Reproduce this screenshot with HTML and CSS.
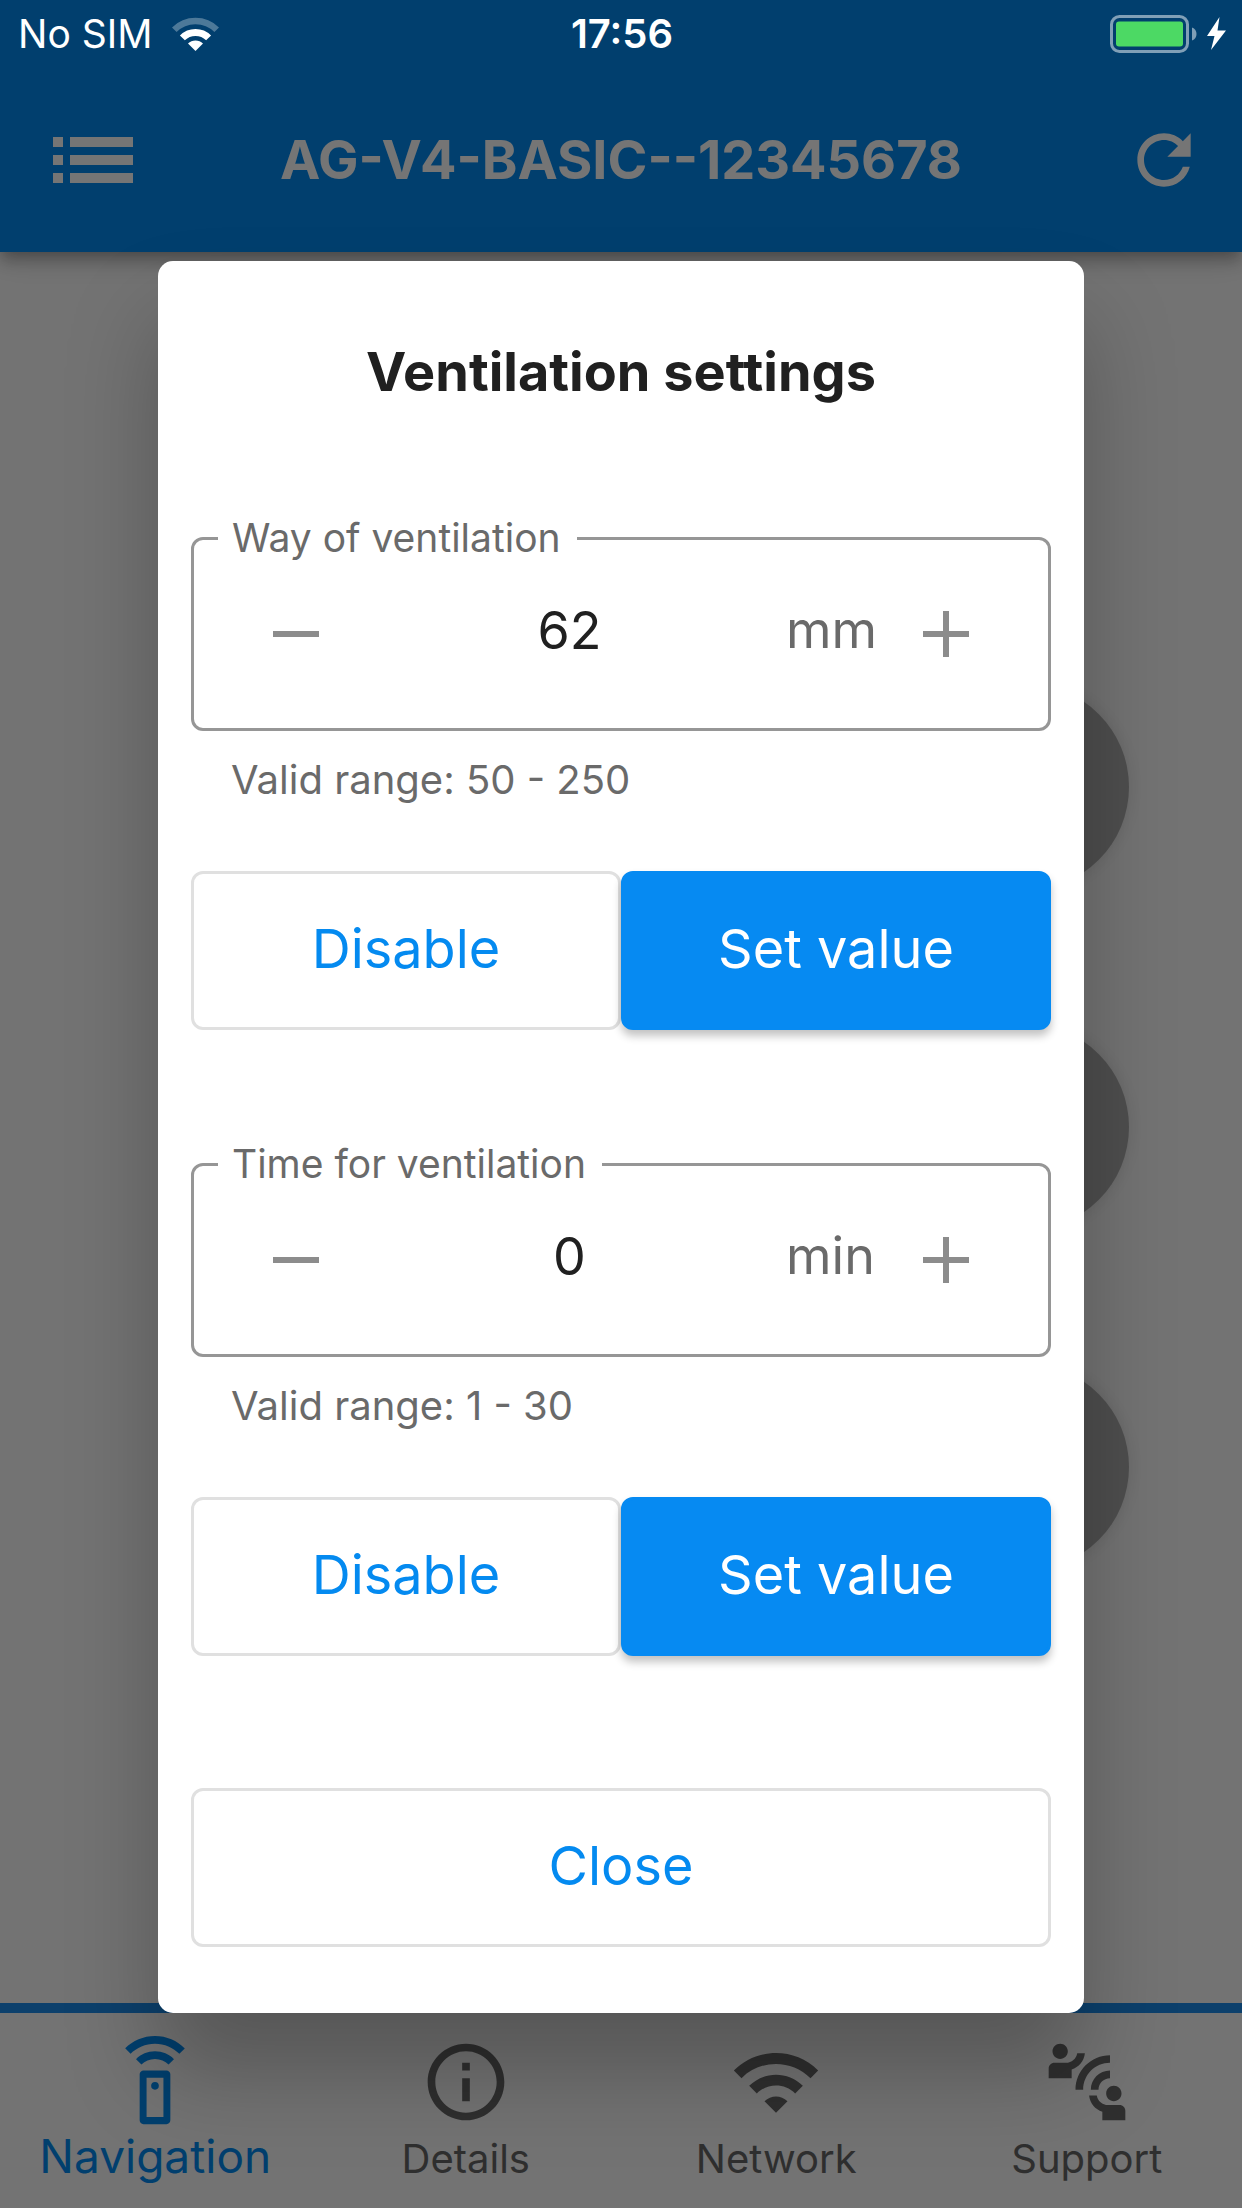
FILE: index.html
```html
<!DOCTYPE html>
<html lang="en">
<head>
<meta charset="utf-8">
<meta name="viewport" content="width=device-width, initial-scale=1">
<title>Ventilation settings</title>
<link rel="stylesheet" href="styles.css">
</head>
<body>
<div class="app">
  <header class="app-header">
    <div class="status-bar">
      <div class="status-left">
        <span>No SIM</span>
        <svg class="status-wifi" viewBox="0 0 47 34" aria-hidden="true">
          <path d="M2.3 12.8A30 30 0 0 1 44.7 12.8" fill="none" stroke="#fff" stroke-width="6.5" opacity=".3"/>
          <path d="M10.4 20.9A18.5 18.5 0 0 1 36.6 20.9" fill="none" stroke="#fff" stroke-width="7"/>
          <path d="M23.5 34L16 26.5A10.6 10.6 0 0 1 31 26.5Z" fill="#fff"/>
        </svg>
      </div>
      <time class="status-time">17:56</time>
      <div class="status-right">
        <svg class="status-battery" viewBox="0 0 116 38" aria-hidden="true">
          <rect x="1.5" y="1.5" width="76" height="35" rx="8" fill="none" stroke="#fff" stroke-opacity=".5" stroke-width="3"/>
          <rect x="6" y="6.5" width="67" height="25" rx="3" fill="#4cd964"/>
          <path d="M82 12.5C88 14.5 88 23.5 82 25.5Z" fill="#fff" fill-opacity=".5"/>
          <path d="M109.5 2L97 21H104.5L101 35L116 15.5H107.5Z" fill="#fff"/>
        </svg>
      </div>
    </div>
    <div class="toolbar">
      <button class="icon-button menu-button" type="button" aria-label="Menu">
        <svg class="list-icon" viewBox="0 0 80 46"><path d="M0 0h10v10H0zM17 0h63v10H17zM0 18h10v10H0zM17 18h63v10H17zM0 36h10v10H0zM17 36h63v10H17z"/></svg>
      </button>
      <h1 class="toolbar-title">AG-V4-BASIC--12345678</h1>
      <button class="icon-button refresh-button" type="button" aria-label="Refresh">
        <svg class="refresh-icon" viewBox="0 0 24 24"><path d="M17.65 6.35C16.2 4.9 14.21 4 12 4c-4.42 0-7.99 3.58-7.99 8s3.57 8 7.99 8c3.73 0 6.84-2.55 7.73-6h-2.08c-.82 2.33-3.04 4-5.65 4-3.31 0-6-2.69-6-6s2.69-6 6-6c1.66 0 3.14.69 4.22 1.78L13 11h7V4l-2.35 2.35z"/></svg>
      </button>
    </div>
  </header>

  <main class="controls">
    <button class="round-button" type="button" aria-label="Up"></button>
    <button class="round-button" type="button" aria-label="Stop"></button>
    <button class="round-button" type="button" aria-label="Down"></button>
  </main>

  <nav class="bottom-nav">
    <a class="nav-item nav-item-active" href="#navigation">
      <svg class="nav-icon" viewBox="0 0 24 24" aria-hidden="true"><path fill-rule="evenodd" d="M15 9H9c-.55 0-1 .45-1 1v12c0 .55.45 1 1 1h6c.55 0 1-.45 1-1V10c0-.55-.45-1-1-1zm-.8 12.1H9.8V10.9h4.4z"/><circle cx="12" cy="13" r="1"/><path d="M7.05 6.05l1.41 1.41C9.37 6.56 10.62 6 12 6s2.63.56 3.54 1.46l1.41-1.41C15.68 4.78 13.93 4 12 4s-3.68.78-4.95 2.05zM12 0C8.96 0 6.21 1.23 4.22 3.22l1.41 1.41C7.26 3.01 9.51 2 12 2s4.74 1.01 6.36 2.64l1.41-1.41C17.79 1.23 15.04 0 12 0z"/></svg>
      <span class="nav-label">Navigation</span>
    </a>
    <a class="nav-item" href="#details">
      <svg class="nav-icon" viewBox="0 0 24 24" aria-hidden="true"><path d="M11 7h2v2h-2zm0 4h2v6h-2zm1-9C6.48 2 2 6.48 2 12s4.48 10 10 10 10-4.48 10-10S17.52 2 12 2zm0 18c-4.41 0-8-3.59-8-8s3.59-8 8-8 8 3.59 8 8-3.59 8-8 8z"/></svg>
      <span class="nav-label">Details</span>
    </a>
    <a class="nav-item" href="#network">
      <svg class="nav-icon" viewBox="0 0 24 24" aria-hidden="true"><path d="M1 9l2 2c4.97-4.97 13.03-4.97 18 0l2-2C16.93 2.93 7.08 2.93 1 9zm8 8l3 3 3-3c-1.65-1.66-4.34-1.66-6 0zm-4-4l2 2c2.76-2.76 7.24-2.76 10 0l2-2C15.14 9.14 8.87 9.14 5 13z"/></svg>
      <span class="nav-label">Network</span>
    </a>
    <a class="nav-item" href="#support">
      <svg class="nav-icon" viewBox="0 0 24 24" aria-hidden="true"><path d="M11 14H9c0-4.97 4.03-9 9-9v2c-3.87 0-7 3.13-7 7zm7-3V9c-2.76 0-5 2.24-5 5h2c0-1.66 1.34-3 3-3zM7 4c0-1.11-.89-2-2-2s-2 .89-2 2 .89 2 2 2 2-.89 2-2zm4.45.5h-2C9.21 5.92 7.99 7 6.5 7h-3C2.67 7 2 7.67 2 8.5V11h6V8.74c1.86-.59 3.25-2.23 3.45-4.24zM19 17c1.11 0 2-.89 2-2s-.89-2-2-2-2 .89-2 2 .89 2 2 2zm1.5 1h-3c-1.49 0-2.71-1.08-2.95-2.5h-2c.2 2.01 1.59 3.65 3.45 4.24V22h6v-2.5c0-.83-.67-1.5-1.5-1.5z"/></svg>
      <span class="nav-label">Support</span>
    </a>
  </nav>
</div>

<div class="overlay">
  <form class="dialog" role="dialog" aria-modal="true" aria-labelledby="dialog-title">
    <h2 class="dialog-title" id="dialog-title">Ventilation settings</h2>

    <section class="setting">
      <fieldset class="field">
        <legend class="field-legend"><label for="way">Way of ventilation</label></legend>
        <div class="field-row">
          <button class="step-button" type="button" aria-label="Decrease"><svg class="step-icon" viewBox="0 0 46 46"><path d="M0 20h46v6H0z"/></svg></button>
          <input class="field-input" id="way" type="text" inputmode="numeric" value="62">
          <span class="field-unit">mm</span>
          <button class="step-button" type="button" aria-label="Increase"><svg class="step-icon" viewBox="0 0 46 46"><path d="M0 20h20V0h6v20h20v6H26v20h-6V26H0z"/></svg></button>
        </div>
      </fieldset>
      <p class="field-help">Valid range: 50 - 250</p>
      <div class="button-row">
        <button class="button button-outline" type="button">Disable</button>
        <button class="button button-filled" type="button">Set value</button>
      </div>
    </section>

    <section class="setting">
      <fieldset class="field">
        <legend class="field-legend"><label for="time">Time for ventilation</label></legend>
        <div class="field-row">
          <button class="step-button" type="button" aria-label="Decrease"><svg class="step-icon" viewBox="0 0 46 46"><path d="M0 20h46v6H0z"/></svg></button>
          <input class="field-input" id="time" type="text" inputmode="numeric" value="0">
          <span class="field-unit">min</span>
          <button class="step-button" type="button" aria-label="Increase"><svg class="step-icon" viewBox="0 0 46 46"><path d="M0 20h20V0h6v20h20v6H26v20h-6V26H0z"/></svg></button>
        </div>
      </fieldset>
      <p class="field-help">Valid range: 1 - 30</p>
      <div class="button-row">
        <button class="button button-outline" type="button">Disable</button>
        <button class="button button-filled" type="button">Set value</button>
      </div>
    </section>

    <button class="button button-outline button-close" type="button">Close</button>
  </form>
</div>
</body>
</html>
```

FILE: styles.css
```css
* {
  box-sizing: border-box;
}

body {
  margin: 0;
  background: #fafafa;
  font-family: Inter, "Liberation Sans", sans-serif;
}

button,
input {
  font: inherit;
}

h1,
h2,
p {
  margin: 0;
}

svg {
  display: block;
  fill: currentColor;
}

.app {
  display: flex;
  flex-direction: column;
  min-height: 100vh;
}

/* Header */
.app-header {
  position: relative;
  background: #048af0;
  color: #fff;
  box-shadow: 0 6px 12px -3px rgba(0, 0, 0, .2), 0 12px 15px rgba(0, 0, 0, .14), 0 3px 30px rgba(0, 0, 0, .12);
}

.status-bar {
  position: relative;
  z-index: 3;
  display: grid;
  grid-template-columns: 1fr auto 1fr;
  align-items: center;
  height: 68px;
  padding: 0 16px 0 18px;
  font-size: 39px;
  line-height: 48px;
}

.status-left {
  display: flex;
  align-items: center;
  gap: 20px;
}

.status-wifi {
  width: 47px;
  height: 34px;
}

.status-time {
  font-size: 40px;
  font-weight: 600;
}

.status-right {
  display: flex;
  justify-content: flex-end;
}

.status-battery {
  width: 116px;
  height: 38px;
}

.toolbar {
  display: grid;
  grid-template-columns: 1fr auto 1fr;
  align-items: center;
  height: 184px;
  padding: 0 38px;
}

.icon-button {
  padding: 0;
  border: 0;
  background: none;
  color: inherit;
}

.menu-button {
  justify-self: start;
  padding-left: 15px;
}

.refresh-button {
  justify-self: end;
}

.list-icon {
  width: 80px;
  height: 46px;
}

.refresh-icon {
  width: 80px;
  height: 80px;
}

.toolbar-title {
  font-size: 54px;
  font-weight: 700;
  line-height: 60px;
}

/* Remote control buttons */
.controls {
  flex: 1;
  display: flex;
  flex-direction: column;
  align-items: flex-end;
  gap: 134px;
  padding: 432px 113px 0;
}

.round-button {
  width: 206px;
  height: 206px;
  padding: 0;
  border: 0;
  border-radius: 50%;
  background: #aaa;
  box-shadow: 0 0 12px 3px rgba(0, 0, 0, .08);
}

/* Bottom navigation */
.bottom-nav {
  display: grid;
  grid-template-columns: repeat(4, 1fr);
  height: 205px;
  padding-top: 23px;
  border-top: 10px solid #1c8cec;
}

.nav-item {
  display: flex;
  flex-direction: column;
  align-items: center;
  color: #686868;
  font-size: 40px;
  line-height: 62px;
  text-decoration: none;
}

.nav-item-active {
  color: #048af0;
  font-size: 46px;
  line-height: 56px;
}

.nav-icon {
  width: 92px;
  height: 92px;
}

/* Modal dialog */
.overlay {
  position: absolute;
  inset: 0;
  z-index: 2;
  padding: 261px 158px 0;
  background: rgba(0, 0, 0, .54);
}

.dialog {
  display: flex;
  flex-direction: column;
  padding: 81px 33px 66px;
  border-radius: 15px;
  background: #fff;
  box-shadow: 0 60px 90px rgba(0, 0, 0, .25);
}

.dialog-title {
  margin-bottom: 112px;
  color: #202020;
  font-size: 54px;
  font-weight: 700;
  line-height: 60px;
  text-align: center;
}

.setting {
  margin-bottom: 110px;
}

.field {
  min-width: 0;
  margin: 0;
  padding: 0;
  border: 3px solid #969696;
  border-radius: 12px;
}

.field-legend {
  margin-left: 24px;
  padding: 0 16px 0 14px;
  color: #6a6a6a;
  font-size: 39px;
  line-height: 48px;
}

.field-row {
  display: flex;
  align-items: center;
  padding: 0 30px 22px;
}

.step-button {
  display: grid;
  place-items: center;
  flex: none;
  width: 144px;
  height: 144px;
  padding: 0;
  border: 0;
  background: none;
  color: #8c8c8c;
}

.step-icon {
  width: 46px;
  height: 46px;
}

.field-input,
.field-unit {
  padding: 0 0 8px;
  font-size: 52px;
  line-height: 60px;
}

.field-input {
  flex: 1;
  min-width: 0;
  height: 68px;
  margin-right: 15px;
  border: 0;
  outline: 0;
  background: none;
  color: #202020;
  text-align: center;
}

.field-unit {
  width: 88px;
  color: #6a6a6a;
}

.field-help {
  margin: 25px 0 67px 40px;
  color: #6a6a6a;
  font-size: 40px;
  line-height: 48px;
}

.button-row {
  display: grid;
  grid-template-columns: 1fr 1fr;
}

.button {
  height: 159px;
  padding: 0 0 4px;
  border: 3px solid transparent;
  border-radius: 12px;
  font-size: 54px;
  line-height: 60px;
}

.button-outline {
  border-color: #e0e0e0;
  background: #fff;
  color: #048af0;
}

.button-filled {
  border-color: #068af2;
  background: #068af2;
  color: #fff;
  box-shadow: 0 6px 8px rgba(0, 0, 0, .24);
}

.button-close {
  margin-top: 22px;
}
```
